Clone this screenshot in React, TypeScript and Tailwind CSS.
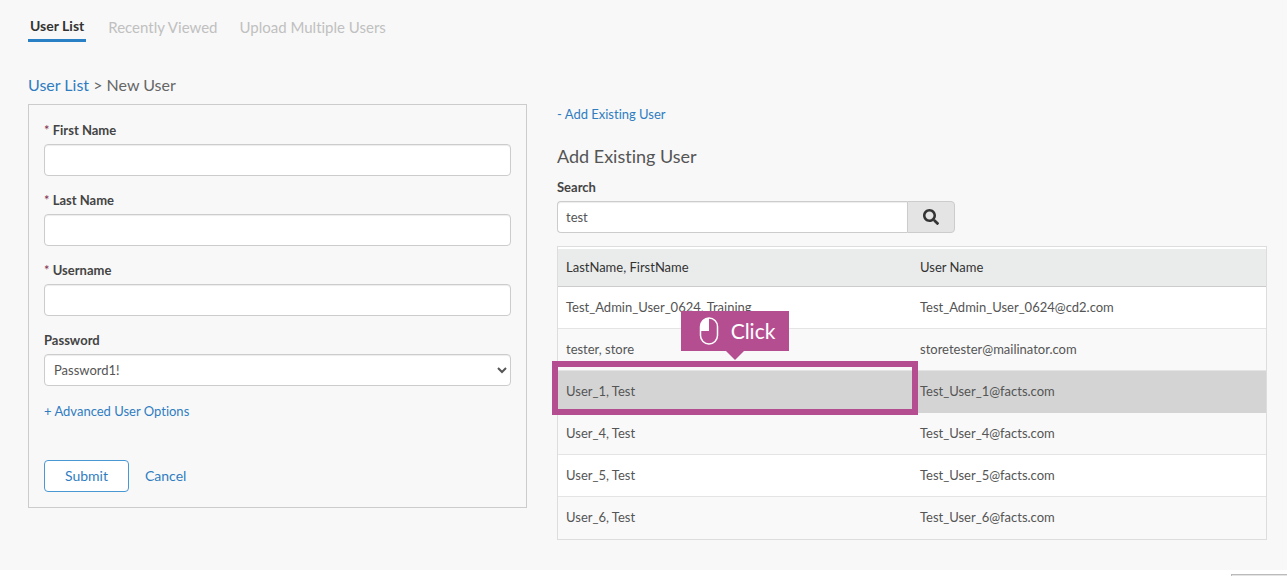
import { useState } from "react";
import { FaSearch } from "react-icons/fa";

type UserRow = {
  name: string;
  userName: string;
};

const tabs = ["User List", "Recently Viewed", "Upload Multiple Users"];

const requiredFields = [
  { id: "first-name", label: "First Name" },
  { id: "last-name", label: "Last Name" },
  { id: "username", label: "Username" },
];

const users: UserRow[] = [
  { name: "Test_Admin_User_0624, Training", userName: "Test_Admin_User_0624@cd2.com" },
  { name: "tester, store", userName: "storetester@mailinator.com" },
  { name: "User_1, Test", userName: "Test_User_1@facts.com" },
  { name: "User_4, Test", userName: "Test_User_4@facts.com" },
  { name: "User_5, Test", userName: "Test_User_5@facts.com" },
  { name: "User_6, Test", userName: "Test_User_6@facts.com" },
];

const highlighted = "User_1, Test";

const inputClass =
  "block h-8 w-full rounded border border-[#ccc] bg-white px-[5px] text-[13px] text-[#555] shadow-[inset_0_1px_1px_rgba(0,0,0,0.075)]";

function Tabs() {
  return (
    <nav className="flex items-start gap-[22px]">
      {tabs.map((tab, index) => (
        <a
          key={tab}
          href="#"
          className={
            index === 0
              ? "border-b-3 border-[#2a80c5] px-0.5 pb-[3px] text-sm leading-5 font-bold text-[#333]"
              : "text-[15px] leading-[22px] text-[#c0c0c0]"
          }
        >
          {tab}
        </a>
      ))}
    </nav>
  );
}

function NewUserForm() {
  return (
    <form className="border border-[#ccc] px-[15px] py-[15px]">
      <div className="space-y-[14px]">
        {requiredFields.map((field) => (
          <div key={field.id}>
            <label htmlFor={field.id} className="mb-1 block text-[13px] leading-5 font-bold text-[#444]">
              <span className="font-normal text-[#7a2a4a]">*</span> {field.label}
            </label>
            <input id={field.id} type="text" className={inputClass} />
          </div>
        ))}
        <div>
          <label htmlFor="password" className="mb-1 block text-[13px] leading-5 font-bold text-[#444]">
            Password
          </label>
          <select id="password" className={inputClass}>
            <option>Password1!</option>
          </select>
        </div>
      </div>
      <a href="#" className="mt-[15px] block text-[13px] leading-5 text-[#2f7dc1]">
        + Advanced User Options
      </a>
      <div className="mt-[39px] flex items-center gap-4">
        <button
          type="submit"
          className="h-8 rounded border border-[#4a98d3] bg-white px-5 text-sm text-[#2f7dc1]"
        >
          Submit
        </button>
        <a href="#" className="text-sm text-[#2f7dc1]">
          Cancel
        </a>
      </div>
    </form>
  );
}

function MouseIcon() {
  return (
    <svg width="20" height="28" viewBox="0 0 20 28" fill="none" aria-hidden="true">
      <path d="M10 1C5 1 1.5 4.6 1.5 9.5V14H10Z" fill="white" />
      <rect x="1.5" y="1" width="17" height="26" rx="8.5" stroke="white" strokeWidth="1.5" />
    </svg>
  );
}

function ClickCallout() {
  return (
    <span className="pointer-events-none absolute -top-[10px] -right-[6px] -bottom-[3px] -left-[6px] z-10 border-6 border-[#b54e91]">
      <span className="absolute bottom-full left-1/2 mb-4 flex h-10 w-[108px] -translate-x-1/2 items-center justify-center bg-[#b54e91] text-[21px] text-white">
        <span className="flex items-center gap-3 pl-1">
          <MouseIcon />
          Click
        </span>
        <svg className="absolute top-full" width="18" height="9" viewBox="0 0 18 9" aria-hidden="true">
          <path d="M0 0H18L9 9Z" fill="#b54e91" />
        </svg>
      </span>
    </span>
  );
}

function UserTable() {
  return (
    <table className="w-full table-fixed border-separate border-spacing-0 border border-[#ddd] text-left text-[13px] text-[#555]">
      <thead>
        <tr className="h-10 bg-[#eaeceb] text-[#333]">
          <th className="border-t-2 border-b border-t-white border-b-[#ccc] px-2 font-normal">LastName, FirstName</th>
          <th className="border-t-2 border-b border-t-white border-b-[#ccc] px-2 font-normal">User Name</th>
        </tr>
      </thead>
      <tbody>
        {users.map((user) => {
          const active = user.name === highlighted;
          return (
            <tr
              key={user.name}
              className={
                active
                  ? "h-[42px] bg-[#d4d4d4] [&>td]:border-[#d4d4d4]"
                  : "h-[42px] bg-white even:bg-[#f9f9f9] [&>td]:border-[#e4e4e4] last:[&>td]:border-b-0"
              }
            >
              <td className="relative border-b px-2">
                {user.name}
                {active ? <ClickCallout /> : null}
              </td>
              <td className="border-b px-2">{user.userName}</td>
            </tr>
          );
        })}
      </tbody>
    </table>
  );
}

function ExistingUser() {
  const [query, setQuery] = useState("test");

  return (
    <section>
      <a href="#" className="block text-[13px] leading-5 text-[#2f7dc1]">
        - Add Existing User
      </a>
      <h2 className="mt-5 text-lg leading-6 text-[#555]">Add Existing User</h2>
      <label htmlFor="search" className="mt-[9px] mb-1 block text-[13px] leading-5 font-bold text-[#444]">
        Search
      </label>
      <div className="flex w-[56%]">
        <input
          id="search"
          type="text"
          value={query}
          onChange={(event) => setQuery(event.target.value)}
          className="h-8 min-w-0 flex-1 rounded-l border border-r-0 border-[#ccc] bg-white px-2 text-[13px] text-[#555] shadow-[inset_0_1px_1px_rgba(0,0,0,0.075)]"
        />
        <button
          type="button"
          aria-label="Search"
          className="flex h-8 w-12 items-center justify-center rounded-r border border-[#ccc] bg-[#e4e4e4] text-base text-[#333]"
        >
          <FaSearch />
        </button>
      </div>
      <div className="mt-[13px]">
        <UserTable />
      </div>
    </section>
  );
}

export default function App() {
  return (
    <div className="bg-white font-[Lato,sans-serif] [font-variant-ligatures:none]">
      <main className="bg-[#f8f8f8] pt-4 pr-5 pb-[30px] pl-7">
        <Tabs />
        <p className="mt-[31px] text-base leading-6 text-[#666]">
          <a href="#" className="text-[#2f7dc1]">
            User List
          </a>{" "}
          &gt; New User
        </p>
        <div className="mt-[7px] grid grid-cols-[499fr_710fr] items-start gap-[30px]">
          <NewUserForm />
          <ExistingUser />
        </div>
      </main>
      <footer className="flex justify-end pt-1">
        <div className="h-0.5 w-14 border-t border-l border-[#bbb] bg-[#e4e4e4]" />
      </footer>
    </div>
  );
}
